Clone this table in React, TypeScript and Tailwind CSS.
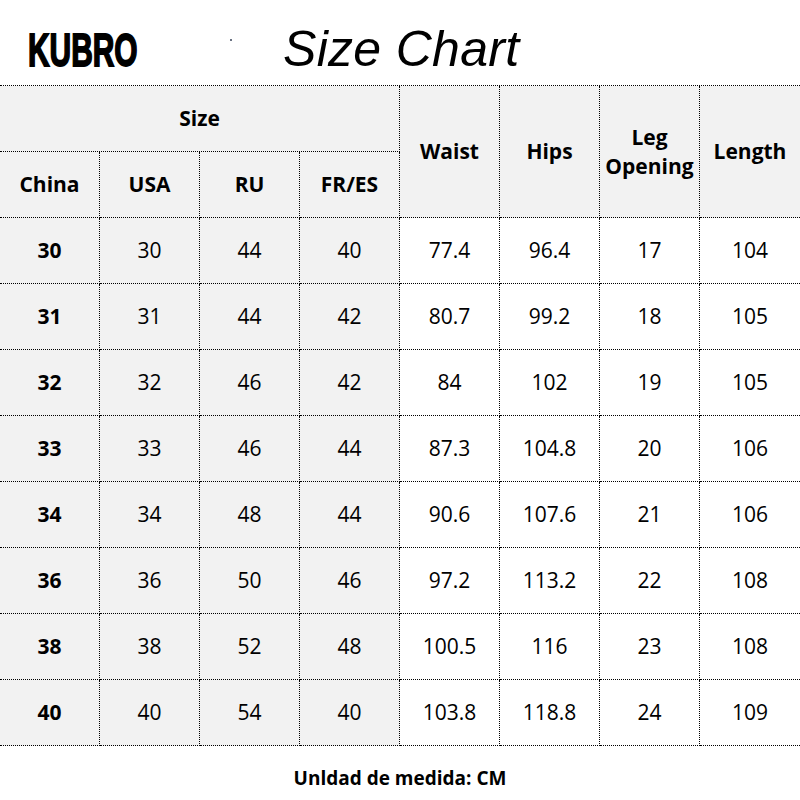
import React from 'react';

const rows = [
  ['30', '30', '44', '40', '77.4', '96.4', '17', '104'],
  ['31', '31', '44', '42', '80.7', '99.2', '18', '105'],
  ['32', '32', '46', '42', '84', '102', '19', '105'],
  ['33', '33', '46', '44', '87.3', '104.8', '20', '106'],
  ['34', '34', '48', '44', '90.6', '107.6', '21', '106'],
  ['36', '36', '50', '46', '97.2', '113.2', '22', '108'],
  ['38', '38', '52', '48', '100.5', '116', '23', '108'],
  ['40', '40', '54', '40', '103.8', '118.8', '24', '109'],
];

const cell = 'flex items-center justify-center border-b border-dotted border-black text-center';

export default function App() {
  return (
    <main
      className="w-[800px] h-[800px] bg-white text-black overflow-hidden"
      style={{ fontFamily: '"Open Sans", "Noto Sans", sans-serif' }}
    >
      {/* title */}
      <div className="h-[85px] flex items-start pl-[28px] pt-[24px]">
        <div className="w-[111px] mt-[3px]">
          <span
            className="inline-block origin-left scale-x-[0.65] text-[46px] font-bold leading-none whitespace-nowrap [-webkit-text-stroke:1.8px_black]"
            style={{ fontFamily: '"Liberation Sans", Arial, sans-serif' }}
          >
            KUBRO
          </span>
        </div>
        <span className="ml-[91px] mt-[15px] w-[2px] h-[2px] bg-gray-500" />
        <h1
          className="ml-[51px] text-[50px] italic leading-none tracking-[0.3px]"
          style={{ fontFamily: '"Liberation Sans", Arial, sans-serif' }}
        >
          Size Chart
        </h1>
      </div>

      {/* table */}
      <div className="grid grid-cols-8 grid-rows-[repeat(10,66px)] border-t border-dotted border-black text-[21px]">
        <div className={`${cell} col-span-4 border-r bg-[#f2f2f2] font-bold`}>Size</div>
        <div className={`${cell} row-span-2 border-r bg-[#f2f2f2] font-bold`}>Waist</div>
        <div className={`${cell} row-span-2 border-r bg-[#f2f2f2] font-bold`}>Hips</div>
        <div className={`${cell} row-span-2 border-r bg-[#f2f2f2] font-bold leading-[29px]`}>
          Leg
          <br />
          Opening
        </div>
        <div className={`${cell} row-span-2 bg-[#f2f2f2] font-bold`}>Length</div>
        {['China', 'USA', 'RU', 'FR/ES'].map((h) => (
          <div key={h} className={`${cell} border-r bg-[#f2f2f2] font-bold`}>
            {h}
          </div>
        ))}

        {rows.map((r) =>
          r.map((v, i) => (
            <div
              key={r[0] + '-' + i}
              className={`${cell} ${i < 7 ? 'border-r' : ''} ${i < 4 ? 'bg-[#f2f2f2]' : 'bg-white'} ${
                i === 0 ? 'font-bold' : ''
              }`}
            >
              {v}
            </div>
          ))
        )}
      </div>

      <p className="mt-[18px] text-center text-[19px] font-bold">Unldad de medida: CM</p>
    </main>
  );
}
